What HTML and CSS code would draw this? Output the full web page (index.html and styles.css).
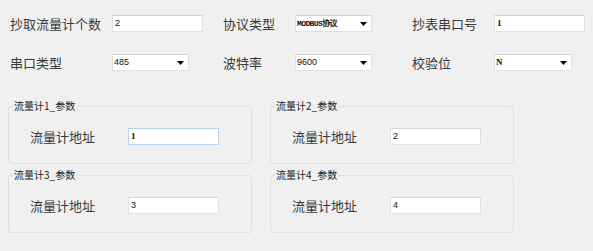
FILE: index.html
```html
<!DOCTYPE html>
<html lang="zh">
<head>
<meta charset="utf-8">
<link rel="stylesheet" href="styles.css">
</head>
<body>
<div class="form">
  <label class="lbl">抄取流量计个数</label>
  <div class="box txt w91">2</div>
  <label class="lbl">协议类型</label>
  <div class="box combo w77"><span class="mono">MODBUS协议</span><svg class="arrow" width="7" height="4" viewBox="0 0 7 4"><path d="M0 0H7L3.5 4Z" fill="#000"/></svg></div>
  <label class="lbl">抄表串口号</label>
  <div class="box txt w91"><span class="serif">1</span></div>

  <label class="lbl">串口类型</label>
  <div class="box combo w77">485<svg class="arrow" width="7" height="4" viewBox="0 0 7 4"><path d="M0 0H7L3.5 4Z" fill="#000"/></svg></div>
  <label class="lbl">波特率</label>
  <div class="box combo w77">9600<svg class="arrow" width="7" height="4" viewBox="0 0 7 4"><path d="M0 0H7L3.5 4Z" fill="#000"/></svg></div>
  <label class="lbl">校验位</label>
  <div class="box combo w78"><span class="serif">N</span><svg class="arrow" width="7" height="4" viewBox="0 0 7 4"><path d="M0 0H7L3.5 4Z" fill="#000"/></svg></div>
</div>

<div class="groups">
  <fieldset class="group">
    <legend>流量计1_参数</legend>
    <div class="row"><span class="glbl">流量计地址</span><div class="box txt w91 focus"><span class="serif">1</span></div></div>
  </fieldset>
  <fieldset class="group">
    <legend>流量计2_参数</legend>
    <div class="row"><span class="glbl">流量计地址</span><div class="box txt w91">2</div></div>
  </fieldset>
  <fieldset class="group">
    <legend>流量计3_参数</legend>
    <div class="row"><span class="glbl">流量计地址</span><div class="box txt w91">3</div></div>
  </fieldset>
  <fieldset class="group">
    <legend>流量计4_参数</legend>
    <div class="row"><span class="glbl">流量计地址</span><div class="box txt w91">4</div></div>
  </fieldset>
</div>
</body>
</html>
```

FILE: styles.css
```css
html, body {
  margin: 0;
  padding: 0;
  background: #f0f0f0;
  width: 593px;
  height: 251px;
  overflow: hidden;
  font-family: "Noto Sans CJK SC", "Noto Sans", sans-serif;
  color: #222;
}

.form {
  display: grid;
  grid-template-columns: 102px 111px 72px 117px 82px auto;
  grid-auto-rows: 17px;
  row-gap: 22px;
  padding: 15px 0 0 10px;
  align-items: center;
}

.lbl {
  font-size: 13px;
  line-height: 17px;
  color: #3a3a3a;
  white-space: nowrap;
}

.box {
  box-sizing: border-box;
  height: 17px;
  background: #fff;
  border: 1px solid #e1e1e1;
  border-top-color: #d4d4d4;
  font-family: "Liberation Sans", Arial, sans-serif;
  font-size: 9px;
  line-height: 15px;
  color: #111;
  padding-left: 2px;
  display: flex;
  align-items: center;
  white-space: nowrap;
}

.w91 { width: 91px; }
.w77 { width: 77px; }
.w78 { width: 78px; }

.combo {
  padding-left: 1px;
}

.arrow {
  margin-left: auto;
  margin-right: 4px;
}

.mono {
  font-family: "Liberation Mono", "Noto Sans CJK SC", monospace;
  font-size: 8px;
  font-weight: bold;
  letter-spacing: -0.6px;
}

.serif {
  font-family: "Liberation Serif", serif;
  font-weight: bold;
  font-size: 9px;
}

.groups {
  display: grid;
  grid-template-columns: 244px 244px;
  column-gap: 18px;
  row-gap: 5px;
  margin: 29px 0 0 8px;
}

.group {
  margin: 0;
  padding: 16px 0 18px 0;
  border: 1px solid #dbe2e7;
  border-radius: 3px;
  min-inline-size: 0;
}

.group legend {
  font-size: 10px;
  line-height: 12px;
  padding: 0 1px;
  margin-left: 4px;
  color: #222;
}

.row {
  display: flex;
  align-items: center;
  height: 17px;
  margin-left: 21px;
}

.glbl {
  width: 98px;
  font-size: 13px;
  line-height: 17px;
  color: #3a3a3a;
}

.focus {
  border-color: #b9d4ea;
}
```
